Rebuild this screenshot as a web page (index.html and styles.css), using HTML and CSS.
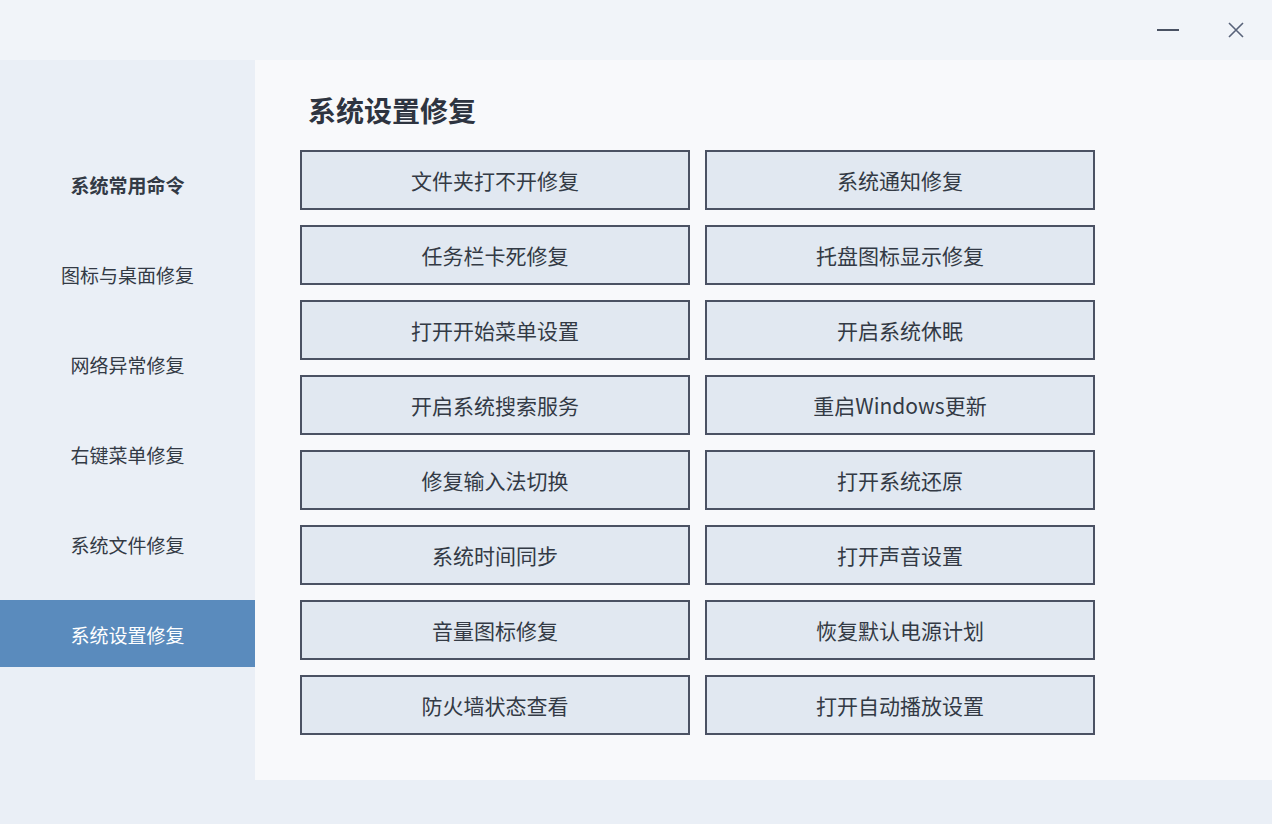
FILE: index.html
```html
<!DOCTYPE html>
<html lang="zh-CN">
<head>
  <meta charset="UTF-8">
  <title>系统设置修复</title>
  <link rel="stylesheet" href="styles.css">
</head>
<body>

  <div class="titleBar">
    <span class="winBtn">
      <svg width="24" height="24" viewBox="0 0 24 24"><path d="M1 12H23" stroke="#4a5263" stroke-width="2"/></svg>
    </span>
    <span class="winBtn">
      <svg width="24" height="24" viewBox="0 0 24 24"><path d="M5 5L19 19M19 5L5 19" stroke="#59637a" stroke-width="1.6"/></svg>
    </span>
  </div>

  <div class="mainArea">
    <div class="sideMenu">
      <div class="menuItem bold">系统常用命令</div>
      <div class="menuItem">图标与桌面修复</div>
      <div class="menuItem">网络异常修复</div>
      <div class="menuItem">右键菜单修复</div>
      <div class="menuItem">系统文件修复</div>
      <div class="menuItem active">系统设置修复</div>
    </div>

    <div class="contentPanel">
      <h1 class="pageTitle">系统设置修复</h1>
      <div class="btnGrid">
        <button class="fixBtn">文件夹打不开修复</button>
        <button class="fixBtn">系统通知修复</button>
        <button class="fixBtn">任务栏卡死修复</button>
        <button class="fixBtn">托盘图标显示修复</button>
        <button class="fixBtn">打开开始菜单设置</button>
        <button class="fixBtn">开启系统休眠</button>
        <button class="fixBtn">开启系统搜索服务</button>
        <button class="fixBtn">重启Windows更新</button>
        <button class="fixBtn">修复输入法切换</button>
        <button class="fixBtn">打开系统还原</button>
        <button class="fixBtn">系统时间同步</button>
        <button class="fixBtn">打开声音设置</button>
        <button class="fixBtn">音量图标修复</button>
        <button class="fixBtn">恢复默认电源计划</button>
        <button class="fixBtn">防火墙状态查看</button>
        <button class="fixBtn">打开自动播放设置</button>
      </div>
    </div>
  </div>

  <div class="bottomBar"></div>

</body>
</html>
```

FILE: styles.css
```css
body {
  margin: 0;
  padding: 0;
  width: 1272px;
  height: 824px;
  overflow: hidden;
  background: #eaeff6;
  font-family: "Noto Sans CJK SC", "Noto Sans", sans-serif;
  color: #333a45;
}
.titleBar {
  height: 60px;
  background: #f1f4f9;
  display: flex;
  justify-content: flex-end;
  align-items: center;
  padding-right: 24px;
  gap: 44px;
}
.winBtn {
  display: flex;
  width: 24px;
  height: 24px;
}
.mainArea {
  display: flex;
  height: 720px;
}
.sideMenu {
  width: 255px;
  background: #eaeff6;
  padding-top: 90px;
  box-sizing: border-box;
  display: flex;
  flex-direction: column;
  gap: 23px;
}
.menuItem {
  height: 67px;
  display: flex;
  align-items: center;
  justify-content: center;
  font-size: 19px;
  padding-top: 2px;
  box-sizing: border-box;
  color: #333a45;
}
.menuItem.bold {
  font-weight: bold;
}
.menuItem.active {
  background: #5a8bbd;
  color: #fff;
}
.contentPanel {
  flex: 1;
  background: #f8f9fb;
  padding: 30px 0 0 45px;
}
.pageTitle {
  margin: 0 0 20px;
  padding-left: 8px;
  font-size: 28px;
  line-height: 40px;
  font-weight: bold;
  color: #2e3440;
}
.btnGrid {
  display: grid;
  grid-template-columns: 390px 390px;
  grid-auto-rows: 60px;
  column-gap: 15px;
  row-gap: 15px;
}
.fixBtn {
  margin: 0;
  background: #e1e8f1;
  border: 2px solid #4b5263;
  font-family: inherit;
  font-size: 21px;
  color: #333a45;
  padding: 0;
  cursor: pointer;
}
.bottomBar {
  height: 44px;
  background: #eaeff6;
}
```
